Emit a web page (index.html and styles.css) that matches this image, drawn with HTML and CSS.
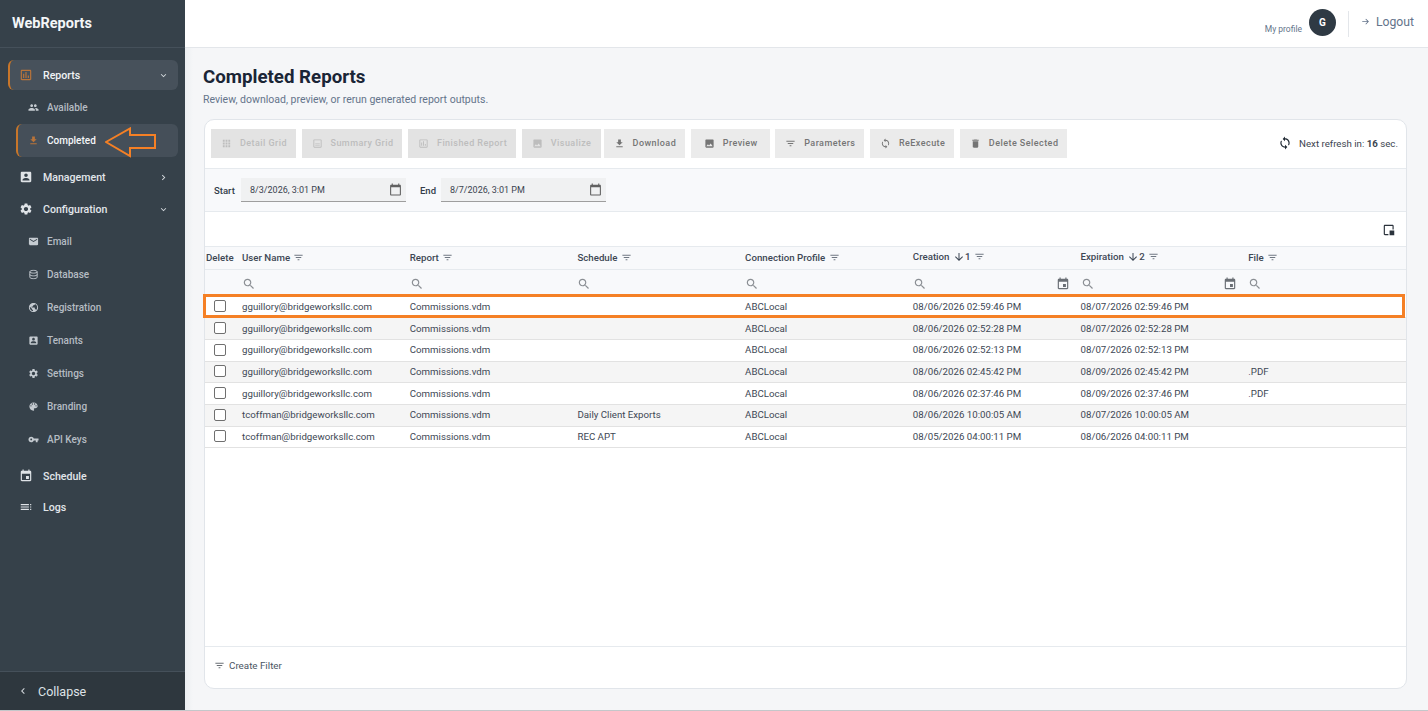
FILE: index.html
```html
<!DOCTYPE html>
<html>

<head>
    <title>WebReports</title>
    <link rel="stylesheet" href="styles.css">
</head>

<body>
    <svg class="sprite" xmlns="http://www.w3.org/2000/svg">
        <symbol id="i-apps" viewBox="0 0 24 24"><path d="M4 8h4V4H4v4zm6 12h4v-4h-4v4zm-6 0h4v-4H4v4zm0-6h4v-4H4v4zm6 0h4v-4h-4v4zm6-10v4h4V4h-4zm-6 4h4V4h-4v4zm6 6h4v-4h-4v4zm0 6h4v-4h-4v4z"/></symbol>
        <symbol id="i-summary" viewBox="0 0 24 24"><path d="M19 5v14H5V5h14m0-2H5c-1.1 0-2 .9-2 2v14c0 1.1.9 2 2 2h14c1.1 0 2-.9 2-2V5c0-1.1-.9-2-2-2zM7 15h10v1.500H7zm0-3h10v1.500H7z"/></symbol>
        <symbol id="i-chart" viewBox="0 0 24 24"><path d="M19 3H5c-1.1 0-2 .9-2 2v14c0 1.1.9 2 2 2h14c1.100 0 2-.9 2-2V5c0-1.100-.9-2-2-2zm0 16H5V5h14v14zM7 10h2v7H7zm4-3h2v10h-2zm4 6h2v4h-2z"/></symbol>
        <symbol id="i-image" viewBox="0 0 24 24"><path d="M21 19V5c0-1.100-.9-2-2-2H5c-1.100 0-2 .9-2 2v14c0 1.100.9 2 2 2h14c1.100 0 2-.9 2-2zM8.500 13.500l2.500 3.010L14.500 12l4.500 6H5l3.500-4.500z"/></symbol>
        <symbol id="i-download" viewBox="0 0 24 24"><path d="M19 9h-4V3H9v6H5l7 7 7-7zM5 18v2h14v-2H5z"/></symbol>
        <symbol id="i-filter" viewBox="0 0 24 24"><path d="M10 18h4v-2h-4v2zM3 6v2h18V6H3zm3 7h12v-2H6v2z"/></symbol>
        <symbol id="i-sync" viewBox="0 0 24 24"><path d="M12 4V1L8 5l4 4V6c3.310 0 6 2.690 6 6 0 1.010-.25 1.970-.7 2.800l1.460 1.460C19.540 15.030 20 13.570 20 12c0-4.420-3.580-8-8-8zm0 14c-3.310 0-6-2.690-6-6 0-1.010.25-1.970.7-2.800L5.240 7.740C4.460 8.970 4 10.430 4 12c0 4.420 3.580 8 8 8v3l4-4-4-4v3z"/></symbol>
        <symbol id="i-delete" viewBox="0 0 24 24"><path d="M6 19c0 1.100.9 2 2 2h8c1.100 0 2-.9 2-2V7H6v12zM19 4h-3.500l-1-1h-5l-1 1H5v2h14V4z"/></symbol>
        <symbol id="i-calendar" viewBox="0 0 24 24"><path d="M20 3h-1V1h-2v2H7V1H5v2H4c-1.100 0-2 .9-2 2v16c0 1.100.9 2 2 2h16c1.100 0 2-.9 2-2V5c0-1.100-.9-2-2-2zm0 18H4V8h16v13z"/></symbol>
        <symbol id="i-event" viewBox="0 0 24 24"><path d="M17 12h-5v5h5v-5zM16 1v2H8V1H6v2H5c-1.110 0-1.990.9-1.990 2L3 19c0 1.100.89 2 2 2h14c1.100 0 2-.9 2-2V5c0-1.100-.9-2-2-2h-1V1h-2zm3 18H5V8h14v11z"/></symbol>
        <symbol id="i-search" viewBox="0 0 24 24"><path d="M15.500 14h-.79l-.28-.27C15.410 12.590 16 11.110 16 9.500 16 5.910 13.090 3 9.500 3S3 5.910 3 9.500 5.910 16 9.500 16c1.610 0 3.090-.59 4.230-1.570l.27.28v.79l5 4.990L20.490 19l-4.990-5zm-6 0C7.010 14 5 11.990 5 9.500S7.010 5 9.500 5 14 7.010 14 9.500 11.990 14 9.500 14z"/></symbol>
        <symbol id="i-people" viewBox="0 0 24 24"><path d="M16 11c1.660 0 2.990-1.340 2.990-3S17.660 5 16 5c-1.660 0-3 1.340-3 3s1.340 3 3 3zm-8 0c1.660 0 2.990-1.340 2.990-3S9.660 5 8 5C6.340 5 5 6.340 5 8s1.340 3 3 3zm0 2c-2.330 0-7 1.170-7 3.500V19h14v-2.500c0-2.330-4.670-3.500-7-3.500zm8 0c-.29 0-.62.02-.97.05 1.160.84 1.970 1.970 1.970 3.450V19h6v-2.500c0-2.330-4.670-3.500-7-3.500z"/></symbol>
        <symbol id="i-account" viewBox="0 0 24 24"><path d="M3 5v14c0 1.100.89 2 2 2h14c1.100 0 2-.9 2-2V5c0-1.100-.9-2-2-2H5c-1.110 0-2 .9-2 2zm12 4c0 1.660-1.340 3-3 3s-3-1.340-3-3 1.340-3 3-3 3 1.340 3 3zm-9 8c0-2 4-3.100 6-3.100s6 1.100 6 3.100v1H6v-1z"/></symbol>
        <symbol id="i-settings" viewBox="0 0 24 24"><path d="M19.140 12.940c.04-.3.06-.61.06-.94 0-.32-.02-.64-.07-.94l2.030-1.580c.18-.14.23-.41.12-.61l-1.920-3.320c-.12-.22-.37-.29-.59-.22l-2.390.96c-.5-.38-1.030-.7-1.620-.94l-.36-2.540c-.04-.24-.24-.41-.48-.41h-3.840c-.24 0-.43.17-.47.41l-.36 2.540c-.59.24-1.130.57-1.620.94l-2.390-.96c-.22-.08-.47 0-.59.22L2.740 8.870c-.12.21-.08.47.12.61l2.030 1.580c-.05.3-.09.63-.09.94s.02.64.07.94l-2.030 1.580c-.18.14-.23.41-.12.61l1.920 3.320c.12.22.37.29.59.22l2.390-.96c.5.38 1.030.7 1.620.94l.36 2.540c.05.24.24.41.48.41h3.840c.24 0 .44-.17.47-.41l.36-2.540c.59-.24 1.130-.56 1.620-.94l2.390.96c.22.08.47 0 .59-.22l1.920-3.320c.12-.22.07-.47-.12-.61l-2.010-1.580zM12 15.600c-1.980 0-3.600-1.620-3.600-3.600s1.620-3.600 3.600-3.600 3.600 1.620 3.600 3.600-1.620 3.600-3.600 3.600z"/></symbol>
        <symbol id="i-email" viewBox="0 0 24 24"><path d="M20 4H4c-1.100 0-1.990.9-1.990 2L2 18c0 1.100.9 2 2 2h16c1.100 0 2-.9 2-2V6c0-1.100-.9-2-2-2zm0 4l-8 5-8-5V6l8 5 8-5v2z"/></symbol>
        <symbol id="i-database" viewBox="0 0 24 24"><path fill="none" stroke="currentColor" stroke-width="2" d="M4 6c0-4 16-4 16 0v12c0 4-16 4-16 0zM4 6c0 4 16 4 16 0M4 12c0 4 16 4 16 0"/></symbol>
        <symbol id="i-public" viewBox="0 0 24 24"><path d="M12 2C6.480 2 2 6.480 2 12s4.480 10 10 10 10-4.480 10-10S17.520 2 12 2zm-1 17.930c-3.950-.49-7-3.850-7-7.930 0-.62.08-1.210.21-1.790L9 15v1c0 1.100.9 2 2 2v1.930zm6.900-2.540c-.26-.81-1-1.390-1.900-1.390h-1v-3c0-.55-.45-1-1-1H8v-2h2c.55 0 1-.45 1-1V7h2c1.100 0 2-.9 2-2v-.41c2.930 1.190 5 4.060 5 7.410 0 2.080-.8 3.970-2.100 5.390z"/></symbol>
        <symbol id="i-palette" viewBox="0 0 24 24"><path d="M12 3c-4.970 0-9 4.030-9 9s4.030 9 9 9c.83 0 1.500-.67 1.500-1.500 0-.39-.15-.74-.39-1.010-.23-.26-.38-.61-.38-.99 0-.83.67-1.500 1.500-1.500H16c2.760 0 5-2.240 5-5 0-4.420-4.030-8-9-8zm-5.500 9c-.83 0-1.500-.67-1.500-1.500S5.670 9 6.500 9 8 9.670 8 10.500 7.330 12 6.500 12zm3-4C8.670 8 8 7.330 8 6.500S8.670 5 9.500 5s1.500.67 1.500 1.500S10.330 8 9.500 8zm5 0c-.83 0-1.500-.67-1.500-1.500S13.670 5 14.500 5s1.500.67 1.500 1.500S15.330 8 14.500 8zm3 4c-.83 0-1.500-.67-1.500-1.500S16.670 9 17.500 9s1.500.67 1.500 1.500-.67 1.500-1.500 1.500z"/></symbol>
        <symbol id="i-key" viewBox="0 0 24 24"><path d="M12.650 10C11.830 7.670 9.610 6 7 6c-3.310 0-6 2.690-6 6s2.690 6 6 6c2.610 0 4.830-1.670 5.650-4H17v4h4v-4h2v-4H12.650zM7 14c-1.100 0-2-.9-2-2s.9-2 2-2 2 .9 2 2-.9 2-2 2z"/></symbol>
        <symbol id="i-list" viewBox="0 0 24 24"><path d="M3 13h14v-2H3v2zm0 4h14v-2H3v2zm0-8h14V7H3v2zm16 8h2v-2h-2v2zm0-4h2v-2h-2v2zm0-6v2h2V7h-2z"/></symbol>
        <symbol id="i-down" viewBox="0 0 24 24"><path d="M7.410 8.590L12 13.170l4.590-4.580L18 10l-6 6-6-6z"/></symbol>
        <symbol id="i-right" viewBox="0 0 24 24"><path d="M8.590 16.590L13.170 12 8.590 7.410 10 6l6 6-6 6z"/></symbol>
        <symbol id="i-left" viewBox="0 0 24 24"><path d="M15.410 7.410L14 6l-6 6 6 6 1.410-1.410L10.830 12z"/></symbol>
        <symbol id="i-logout" viewBox="0 0 24 24"><path d="M12 4l-1.410 1.410L15.170 10H3v2h12.170l-4.580 4.590L12 18l7-7z"/></symbol>
        <symbol id="i-sort" viewBox="0 0 24 24"><path d="M20 12l-1.410-1.410L13 16.170V4h-2v12.170l-5.580-5.590L4 12l8 8 8-8z"/></symbol>
        <symbol id="i-layout" viewBox="0 0 24 24"><path d="M5 3h13c1.100 0 2 .9 2 2v6h-2V5H5v14h6v2H5c-1.100 0-2-.9-2-2V5c0-1.100.9-2 2-2z"/><path d="M13 13h8v8h-8z"/></symbol>
    </svg>

    <div class="app">
        <aside class="sidebar">
            <div class="brand">WebReports</div>
            <nav class="nav">
                <a class="nav-top open"><svg class="icon accent"><use href="#i-chart"/></svg><span>Reports</span><svg class="chev"><use href="#i-down"/></svg></a>
                <a class="nav-sub"><svg class="icon"><use href="#i-people"/></svg><span>Available</span></a>
                <a class="nav-sub current"><svg class="icon accent"><use href="#i-download"/></svg><span>Completed</span></a>
                <a class="nav-top gap"><svg class="icon"><use href="#i-account"/></svg><span>Management</span><svg class="chev"><use href="#i-right"/></svg></a>
                <a class="nav-top"><svg class="icon"><use href="#i-settings"/></svg><span>Configuration</span><svg class="chev"><use href="#i-down"/></svg></a>
                <a class="nav-sub"><svg class="icon"><use href="#i-email"/></svg><span>Email</span></a>
                <a class="nav-sub"><svg class="icon"><use href="#i-database"/></svg><span>Database</span></a>
                <a class="nav-sub"><svg class="icon"><use href="#i-public"/></svg><span>Registration</span></a>
                <a class="nav-sub"><svg class="icon"><use href="#i-account"/></svg><span>Tenants</span></a>
                <a class="nav-sub"><svg class="icon"><use href="#i-settings"/></svg><span>Settings</span></a>
                <a class="nav-sub"><svg class="icon"><use href="#i-palette"/></svg><span>Branding</span></a>
                <a class="nav-sub"><svg class="icon"><use href="#i-key"/></svg><span>API Keys</span></a>
                <a class="nav-top gap"><svg class="icon"><use href="#i-event"/></svg><span>Schedule</span></a>
                <a class="nav-top logs"><svg class="icon"><use href="#i-list"/></svg><span>Logs</span></a>
            </nav>
            <div class="collapse"><svg class="chev"><use href="#i-left"/></svg><span>Collapse</span></div>
        </aside>

        <div class="main">
            <header class="topbar">
                <span class="profile-label">My profile</span>
                <span class="avatar">G</span>
                <span class="divider"></span>
                <a class="logout"><svg><use href="#i-logout"/></svg>Logout</a>
            </header>

            <div class="content">
                <h1 class="page-title">Completed Reports</h1>
                <p class="page-sub">Review, download, preview, or rerun generated report outputs.</p>

                <section class="card">
                    <div class="toolbar">
                        <button class="btn off"><svg><use href="#i-apps"/></svg>Detail Grid</button>
                        <button class="btn off"><svg><use href="#i-summary"/></svg>Summary Grid</button>
                        <button class="btn off"><svg><use href="#i-chart"/></svg>Finished Report</button>
                        <button class="btn off last-off"><svg><use href="#i-image"/></svg>Visualize</button>
                        <button class="btn"><svg><use href="#i-download"/></svg>Download</button>
                        <button class="btn"><svg><use href="#i-image"/></svg>Preview</button>
                        <button class="btn"><svg><use href="#i-filter"/></svg>Parameters</button>
                        <button class="btn"><svg><use href="#i-sync"/></svg>ReExecute</button>
                        <button class="btn"><svg><use href="#i-delete"/></svg>Delete Selected</button>
                        <div class="refresh"><svg><use href="#i-sync"/></svg><span>Next refresh in: <b>16</b> sec.</span></div>
                    </div>

                    <div class="dates">
                        <label class="date-label">Start</label>
                        <div class="date-input"><span>8/3/2026, 3:01 PM</span><svg><use href="#i-calendar"/></svg></div>
                        <label class="date-label end">End</label>
                        <div class="date-input"><span>8/7/2026, 3:01 PM</span><svg><use href="#i-calendar"/></svg></div>
                    </div>

                    <div class="grid-tools"><svg><use href="#i-layout"/></svg></div>

                    <table class="grid">
                        <colgroup>
                            <col class="col-check">
                            <col class="col-data"><col class="col-data"><col class="col-data"><col class="col-data"><col class="col-data"><col class="col-data"><col class="col-data">
                        </colgroup>
                        <thead>
                            <tr class="head">
                                <th class="check-head">Delete</th>
                                <th>User Name <svg class="th-filter"><use href="#i-filter"/></svg></th>
                                <th>Report <svg class="th-filter"><use href="#i-filter"/></svg></th>
                                <th>Schedule <svg class="th-filter"><use href="#i-filter"/></svg></th>
                                <th>Connection Profile <svg class="th-filter"><use href="#i-filter"/></svg></th>
                                <th>Creation <svg class="th-sort"><use href="#i-sort"/></svg><span class="rank">1</span> <svg class="th-filter"><use href="#i-filter"/></svg></th>
                                <th>Expiration <svg class="th-sort"><use href="#i-sort"/></svg><span class="rank">2</span> <svg class="th-filter"><use href="#i-filter"/></svg></th>
                                <th>File <svg class="th-filter"><use href="#i-filter"/></svg></th>
                            </tr>
                            <tr class="filters">
                                <td></td>
                                <td><svg class="search"><use href="#i-search"/></svg></td>
                                <td><svg class="search"><use href="#i-search"/></svg></td>
                                <td><svg class="search"><use href="#i-search"/></svg></td>
                                <td><svg class="search"><use href="#i-search"/></svg></td>
                                <td><div class="filter-date"><svg class="search"><use href="#i-search"/></svg><svg class="cal"><use href="#i-event"/></svg></div></td>
                                <td><div class="filter-date"><svg class="search"><use href="#i-search"/></svg><svg class="cal"><use href="#i-event"/></svg></div></td>
                                <td><svg class="search"><use href="#i-search"/></svg></td>
                            </tr>
                        </thead>
                        <tbody>
                            <tr>
                                <td class="check-cell"><span class="checkbox"></span></td>
                                <td>gguillory@bridgeworksllc.com</td><td>Commissions.vdm</td><td></td><td>ABCLocal</td>
                                <td>08/06/2026 02:59:46 PM</td><td>08/07/2026 02:59:46 PM</td><td></td>
                            </tr>
                            <tr>
                                <td class="check-cell"><span class="checkbox"></span></td>
                                <td>gguillory@bridgeworksllc.com</td><td>Commissions.vdm</td><td></td><td>ABCLocal</td>
                                <td>08/06/2026 02:52:28 PM</td><td>08/07/2026 02:52:28 PM</td><td></td>
                            </tr>
                            <tr>
                                <td class="check-cell"><span class="checkbox"></span></td>
                                <td>gguillory@bridgeworksllc.com</td><td>Commissions.vdm</td><td></td><td>ABCLocal</td>
                                <td>08/06/2026 02:52:13 PM</td><td>08/07/2026 02:52:13 PM</td><td></td>
                            </tr>
                            <tr>
                                <td class="check-cell"><span class="checkbox"></span></td>
                                <td>gguillory@bridgeworksllc.com</td><td>Commissions.vdm</td><td></td><td>ABCLocal</td>
                                <td>08/06/2026 02:45:42 PM</td><td>08/09/2026 02:45:42 PM</td><td>.PDF</td>
                            </tr>
                            <tr>
                                <td class="check-cell"><span class="checkbox"></span></td>
                                <td>gguillory@bridgeworksllc.com</td><td>Commissions.vdm</td><td></td><td>ABCLocal</td>
                                <td>08/06/2026 02:37:46 PM</td><td>08/09/2026 02:37:46 PM</td><td>.PDF</td>
                            </tr>
                            <tr>
                                <td class="check-cell"><span class="checkbox"></span></td>
                                <td>tcoffman@bridgeworksllc.com</td><td>Commissions.vdm</td><td>Daily Client Exports</td><td>ABCLocal</td>
                                <td>08/06/2026 10:00:05 AM</td><td>08/07/2026 10:00:05 AM</td><td></td>
                            </tr>
                            <tr>
                                <td class="check-cell"><span class="checkbox"></span></td>
                                <td>tcoffman@bridgeworksllc.com</td><td>Commissions.vdm</td><td>REC APT</td><td>ABCLocal</td>
                                <td>08/05/2026 04:00:11 PM</td><td>08/06/2026 04:00:11 PM</td><td></td>
                            </tr>
                        </tbody>
                    </table>

                    <div class="grid-space"></div>

                    <div class="card-foot"><svg><use href="#i-filter"/></svg>Create Filter</div>
                </section>
            </div>
        </div>
    </div>

    <!-- Annotations drawn on top of the screenshot -->
    <div class="mark-row"></div>
    <svg class="mark-arrow" viewBox="0 0 52 32"><path d="M1 15 L25 1.500 V8 H50 V21 H25 V29 Z"/></svg>
</body>

</html>
```

FILE: styles.css
```css
* {
    box-sizing: border-box;
}

html,
body {
    margin: 0;
    height: 100%;
    overflow: hidden;
}

body {
    font-family: Roboto, "Liberation Sans", sans-serif;
    background: #fff;
    color: #334155;
}

.sprite {
    display: none;
}

svg {
    fill: currentColor;
    flex: none;
}

.app {
    display: flex;
    height: 711px;
    border-bottom: 1px solid #c4c7ca;
}

/* Sidebar */
.sidebar {
    width: 185px;
    flex: none;
    display: flex;
    flex-direction: column;
    background: #36414a;
    color: #fff;
    border-bottom-left-radius: 5px;
}

.brand {
    height: 48px;
    padding: 15px 12px 0;
    font-size: 14.5px;
    font-weight: 700;
    color: #f4f6f8;
    border-bottom: 1px solid #45505a;
}

.nav {
    flex: 1;
    padding: 12px 7px 0 8px;
}

.nav a {
    display: flex;
    align-items: center;
}

.nav-top {
    height: 32px;
    padding-left: 11px;
    font-size: 10.6px;
    font-weight: 500;
    color: #e2e6ea;
}

.nav-top .icon {
    width: 14px;
    height: 14px;
    margin-right: 10px;
    color: #dfe3e7;
}

.nav-top.open {
    height: 30px;
    margin-bottom: 1px;
    background: #47515b;
    border-left: 2px solid #c8762a;
    border-radius: 6px;
    padding-left: 9px;
    color: #f1f3f5;
}

.nav-top.gap {
    margin-top: 4px;
}

.nav-top.logs {
    margin-top: -1px;
}

.nav-sub {
    height: 33px;
    margin-left: 8px;
    padding-left: 12px;
    font-size: 10px;
    font-weight: 500;
    color: #b5bcc3;
}

.nav-sub .icon {
    width: 11px;
    height: 11px;
    margin-right: 8px;
    color: #c5cbd1;
}

.nav-sub.current {
    background: #454f59;
    border-left: 2px solid #c8762a;
    border-radius: 6px;
    padding-left: 10px;
    color: #f4f6f8;
}

.nav .icon.accent {
    color: #b9743a;
}

.chev {
    width: 11px;
    height: 11px;
    margin-left: auto;
    margin-right: 9px;
    color: #d5dade;
}

.collapse {
    height: 39px;
    display: flex;
    align-items: center;
    padding-left: 17px;
    font-size: 12.5px;
    color: #dfe3e7;
    background: #2e373e;
    border-top: 1px solid #45505a;
}

.collapse .chev {
    margin: 0 9px 0 0;
    width: 12px;
    height: 12px;
}

/* Top bar */
.main {
    flex: 1;
    min-width: 0;
    display: flex;
    flex-direction: column;
}

.topbar {
    height: 48px;
    flex: none;
    display: flex;
    align-items: center;
    justify-content: flex-end;
    padding-right: 14px;
    background: #fff;
    border-bottom: 1px solid #e3e6ea;
}

.profile-label {
    margin: 10px 7px 0 0;
    font-size: 8.5px;
    color: #64748b;
}

.avatar {
    width: 27px;
    height: 27px;
    border-radius: 50%;
    display: flex;
    align-items: center;
    justify-content: center;
    margin-bottom: 2px;
    background: #2f3a44;
    color: #fff;
    font-size: 10px;
    font-weight: 700;
}

.divider {
    width: 1px;
    height: 26px;
    margin: 0 12px;
    background: #e3e6ea;
}

.logout {
    display: flex;
    align-items: center;
    font-size: 12.2px;
    color: #64748b;
    margin-bottom: 3px;
}

.logout svg {
    width: 10px;
    height: 10px;
    margin-right: 5px;
}

/* Page */
.content {
    flex: 1;
    min-height: 0;
    display: flex;
    flex-direction: column;
    padding: 17px 21px 21px 18px;
    background: linear-gradient(90deg, #eceff2 0, #f5f6f8 8px);
}

.page-title {
    margin: 0;
    font-size: 18.7px;
    line-height: 24px;
    font-weight: 700;
    color: #1a2536;
}

.page-sub {
    margin: 4px 0 12px;
    font-size: 10.5px;
    line-height: 14px;
    color: #64748b;
}

.card {
    flex: 1;
    min-height: 0;
    margin-left: 1px;
    display: flex;
    flex-direction: column;
    background: #fff;
    border: 1px solid #e1e5ea;
    border-radius: 10px;
    overflow: hidden;
}

.toolbar {
    height: 49px;
    flex: none;
    display: flex;
    align-items: center;
    padding: 0 8px 2px 6px;
    border-bottom: 1px solid #e6eaee;
}

.btn {
    height: 29px;
    min-width: 79px;
    display: flex;
    align-items: center;
    justify-content: center;
    margin-right: 5.5px;
    padding: 0 9px 0 10px;
    border: 0;
    background: #ebebeb;
    color: #757575;
    font-family: inherit;
    font-size: 9px;
    font-weight: 500;
    letter-spacing: .45px;
    white-space: nowrap;
}

.btn svg {
    width: 11px;
    height: 11px;
    margin-right: 8px;
}

.btn.off {
    background: #e3e3e3;
    color: #bdbdbd;
}

.btn.last-off {
    margin-right: 3px;
}

.refresh {
    margin-left: auto;
    display: flex;
    align-items: center;
    font-size: 9.7px;
    color: #3b4450;
}

.refresh svg {
    width: 14px;
    height: 14px;
    margin-right: 7px;
    color: #1f2933;
}

.refresh b {
    font-weight: 700;
}

.dates {
    height: 43px;
    flex: none;
    display: flex;
    align-items: center;
    padding-left: 9px;
    background: #f8f9fb;
    border-bottom: 1px solid #e6eaee;
}

.date-label {
    width: 27px;
    font-size: 9.5px;
    font-weight: 500;
    color: #333d4a;
}

.date-label.end {
    width: 21px;
}

.date-input {
    width: 165px;
    height: 24px;
    display: flex;
    align-items: center;
    justify-content: space-between;
    margin-right: 14px;
    padding: 0 4px 0 9px;
    background: #f0f1f2;
    border-bottom: 1px solid #9e9e9e;
    font-size: 9px;
    color: #3a4350;
}

.date-input svg {
    width: 13px;
    height: 13px;
    color: #616161;
}

.grid-tools {
    height: 35px;
    flex: none;
    display: flex;
    align-items: center;
    justify-content: flex-end;
    padding: 2px 10px 0 0;
    border-bottom: 1px solid #e6eaee;
    color: #2b333c;
}

.grid-tools svg {
    width: 14px;
    height: 14px;
}

/* Grid */
.grid {
    width: 1209px;
    flex: none;
    table-layout: fixed;
    border-collapse: collapse;
    font-size: 9.7px;
    color: #3d4754;
}

.col-check {
    width: 35px;
}

.col-data {
    width: 167.67px;
}

.grid th {
    height: 22px;
    padding: 0 0 1px 2px;
    text-align: left;
    font-weight: 500;
    background: #f8f9fb;
    color: #3d4754;
    border-bottom: 1px solid #e6eaee;
    white-space: nowrap;
}

.grid .check-head {
    padding-left: 1px;
}

.grid td {
    height: 21.7px;
    padding: 0 0 1px 2px;
    border-bottom: 1px solid #e2e2e2;
    white-space: nowrap;
}

.grid tbody tr:nth-child(even) td {
    background: #f5f5f5;
}

.grid .filters td {
    height: 27px;
    padding: 2px 0 0 2px;
    background: #f8f9fb;
    border-bottom: 0;
}

.grid .check-cell {
    padding-left: 9px;
}

.checkbox {
    display: block;
    width: 12px;
    height: 12px;
    background: #fff;
    border: 1.5px solid #6f6f6f;
    border-radius: 2px;
}

.th-filter {
    width: 11px;
    height: 11px;
    margin-left: 1px;
    vertical-align: -2px;
    color: #6f7782;
}

.th-sort {
    width: 12px;
    height: 12px;
    margin-left: 1px;
    vertical-align: -3px;
}

.search {
    width: 14px;
    height: 14px;
    vertical-align: middle;
    color: #8b8f94;
}

.filter-date {
    display: flex;
    justify-content: space-between;
    align-items: center;
    padding-right: 9px;
}

.cal {
    width: 14px;
    height: 14px;
    color: #6a6f75;
}

.grid-space {
    flex: 1;
}

.card-foot {
    height: 42px;
    flex: none;
    display: flex;
    align-items: center;
    padding: 0 0 4px 9px;
    border-top: 1px solid #e6eaee;
    font-size: 9.8px;
    color: #4a5563;
}

.card-foot svg {
    width: 11px;
    height: 11px;
    margin-right: 4px;
    color: #6a6f75;
}

/* Orange annotations */
.mark-row {
    position: absolute;
    left: 203px;
    top: 294px;
    width: 1202px;
    height: 24px;
    border: 3px solid #f58025;
}

.mark-arrow {
    position: absolute;
    left: 105px;
    top: 127px;
    width: 52px;
    height: 32px;
    fill: none;
    stroke: #f58025;
    stroke-width: 2;
}
```
